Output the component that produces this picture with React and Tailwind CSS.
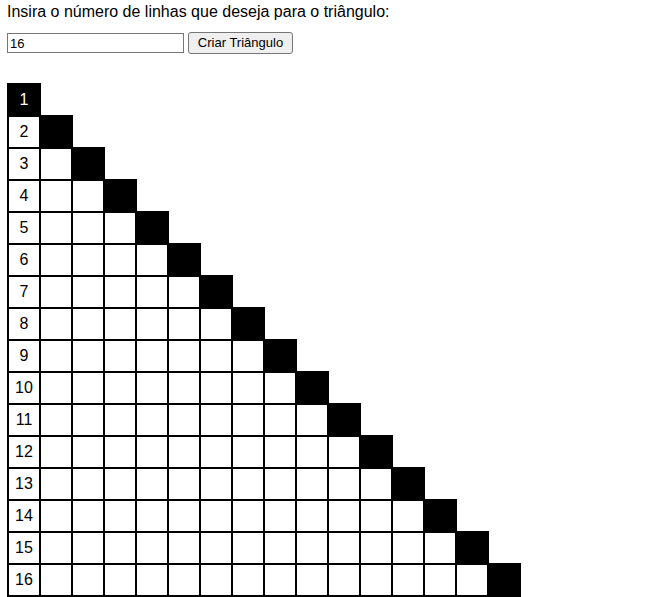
export default function App() {
    const n = 16;
    const rows = Array.from({ length: n }, (_, i) => i + 1);

    return (
        <div className="w-full min-h-[597px] bg-white text-black font-['Liberation_Sans',Arial,sans-serif]">
            <div className="pl-[7px]">
                <p className="text-base leading-[18px] pt-[3px]">Insira o número de linhas que deseja para o triângulo:</p>
                <div className="flex items-center gap-1 mt-[11px]">
                    <input
                        type="text"
                        defaultValue="16"
                        className="w-[177px] h-[20px] border border-[#767676] px-[2px] text-[13px] outline-none"
                    />
                    <button className="h-[22px] w-[105px] bg-[#efefef] border border-[#767676] rounded-[3px] text-[13px] text-black">
                        Criar Triângulo
                    </button>
                </div>
                <table className="border-collapse mt-[29px]">
                    <tbody>
                        {rows.map((r) => (
                            <tr key={r}>
                                {Array.from({ length: r }, (_, j) => j + 1).map((c) => (
                                    <td
                                        key={c}
                                        className={
                                            c === r
                                                ? "w-8 h-8 p-0 border-2 border-black bg-black text-white text-center text-base"
                                                : "w-8 h-8 p-0 border-2 border-black bg-white text-black text-center text-base"
                                        }
                                    >
                                        {c === 1 ? r : ""}
                                    </td>
                                ))}
                            </tr>
                        ))}
                    </tbody>
                </table>
            </div>
        </div>
    );
}
